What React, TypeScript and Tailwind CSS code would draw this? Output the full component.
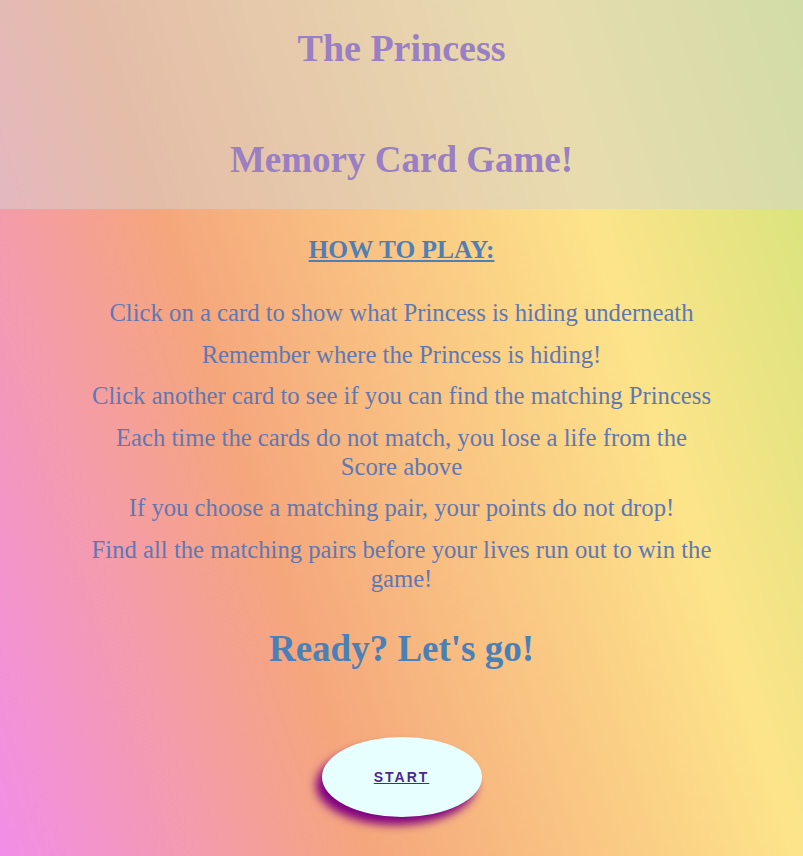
import React from 'react';

const rules: string[] = [
  "Click on a card to show what Princess is hiding underneath",
  "Remember where the Princess is hiding!",
  "Click another card to see if you can find the matching Princess",
  "Each time the cards do not match, you lose a life from the Score above",
  "If you choose a matching pair, your points do not drop!",
  "Find all the matching pairs before your lives run out to win the game!",
];

const App: React.FC = () => {
  return (
    <div className="w-full min-h-[856px] bg-[linear-gradient(72deg,#f28ee8_0%,#f5a67c_34%,#fde48a_74%,#d0e47a_100%)] font-['Liberation_Serif',serif]">
      {/* HEADER */}
      <header className="w-full h-[209px] bg-[#d3d3d3]/50 flex flex-col items-center pt-[26px] text-[#9a7fc2]">
        <h1 className="text-[38px] leading-[44px] font-bold">The Princess</h1>
        <h1 className="text-[37px] leading-[44px] font-bold mt-[68px]">Memory Card Game!</h1>
      </header>

      {/* INSTRUCTIONS */}
      <main className="w-[628px] mx-auto flex flex-col items-center text-center pt-[25px]">
        <h2 className="text-[25.4px] leading-[30px] font-bold underline text-[#4f7fb6]">HOW TO PLAY:</h2>
        <div className="flex flex-col gap-[12.5px] mt-[34px] text-[24.7px] leading-[29px] text-[#5f78b4]">
          {rules.map((rule, i) => (
            <p key={i}>{rule}</p>
          ))}
        </div>
        <h2 className="text-[37px] leading-[44px] font-bold text-[#4a80b8] mt-[34px]">Ready? Let's go!</h2>

        <button className="mt-[66px] w-[160px] h-[80px] rounded-[50%] bg-[#e8ffff] shadow-[-6px_8px_10px_#800080] font-['Liberation_Sans',sans-serif] text-[14px] font-bold tracking-[2px] underline text-[#4b2a8a] pt-[2px]">
          START
        </button>
      </main>
    </div>
  );
};

export default App;
